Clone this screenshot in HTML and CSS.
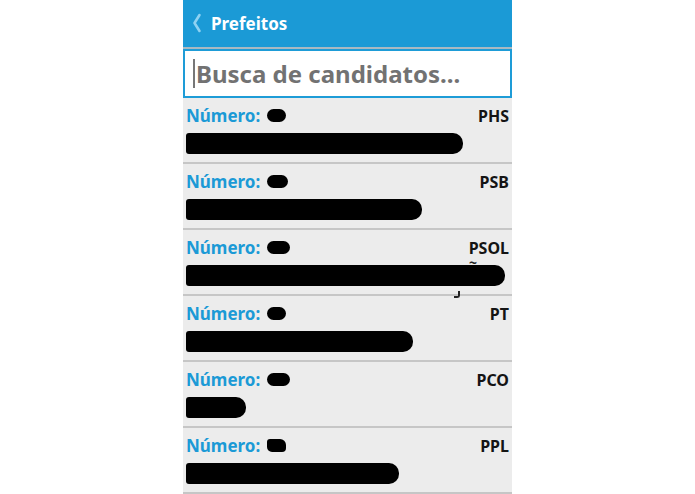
FILE: index.html
```html
<!DOCTYPE html>
<html lang="pt">

<head>
    <meta charset="UTF-8">
    <title>Prefeitos</title>
    <link rel="stylesheet" href="styles.css">
</head>

<body>

    <div class="phone">
        <!-- Action bar -->
        <div class="topbar">
            <svg class="back" width="10" height="20" viewBox="0 0 10 20">
                <path d="M7.5 2 L2.5 10 L7.5 18" fill="none" stroke="#8fd2f2" stroke-width="2.6" stroke-linecap="round" stroke-linejoin="round"/>
            </svg>
            <span class="title">Prefeitos</span>
        </div>

        <!-- Search -->
        <div class="search">
            <span class="cursor"></span>
            <span class="placeholder">Busca de candidatos...</span>
        </div>

        <!-- Candidates -->
        <ul class="list">
            <li class="item">
                <div class="row">
                    <span class="label">Número: <span class="num-blob w18"></span></span>
                    <span class="party">PHS</span>
                </div>
                <div class="name-blob" style="width: 277px"></div>
            </li>
            <li class="item">
                <div class="row">
                    <span class="label">Número: <span class="num-blob w20"></span></span>
                    <span class="party">PSB</span>
                </div>
                <div class="name-blob" style="width: 236px"></div>
            </li>
            <li class="item">
                <div class="row">
                    <span class="label">Número: <span class="num-blob w22"></span></span>
                    <span class="party">PSOL</span>
                </div>
                <div class="name-wrap">
                    <div class="name-blob" style="width: 319px"></div>
                    <span class="tilde">~</span>
                    <span class="cedilla"></span>
                </div>
            </li>
            <li class="item">
                <div class="row">
                    <span class="label">Número: <span class="num-blob w18"></span></span>
                    <span class="party">PT</span>
                </div>
                <div class="name-blob" style="width: 227px"></div>
            </li>
            <li class="item">
                <div class="row">
                    <span class="label">Número: <span class="num-blob w22"></span></span>
                    <span class="party">PCO</span>
                </div>
                <div class="name-blob" style="width: 60px"></div>
            </li>
            <li class="item">
                <div class="row">
                    <span class="label">Número: <span class="num-blob w18 rough"></span></span>
                    <span class="party">PPL</span>
                </div>
                <div class="name-blob" style="width: 213px"></div>
            </li>
        </ul>
    </div>

</body>

</html>
```

FILE: styles.css
```css
/* Phone list screen */
body {
    margin: 0;
    background: #fff;
    font-family: 'Noto Sans', 'Open Sans', sans-serif;
}

.phone {
    width: 329px;
    height: 494px;
    margin: 0 auto;
    background: #ececec;
    overflow: hidden;
}

.topbar {
    height: 49px;
    box-sizing: border-box;
    background: #1b9ad6;
    border-bottom: 2px solid #a9b9c2;
    display: flex;
    align-items: center;
    padding-left: 9px;
}

.back {
    margin-right: 9px;
    margin-top: -1px;
}

.title {
    color: #fff;
    font-weight: bold;
    font-size: 17px;
}

.search {
    height: 49px;
    box-sizing: border-box;
    background: #fff;
    border: 2px solid #1e9cd7;
    display: flex;
    align-items: center;
    padding-left: 8px;
}

.cursor {
    width: 2px;
    height: 29px;
    background: #777;
    margin-right: 1px;
}

.placeholder {
    color: #727272;
    font-weight: bold;
    font-size: 24px;
    line-height: 1;
}

.list {
    list-style: none;
    margin: 0;
    padding: 0;
}

.item {
    height: 66px;
    box-sizing: border-box;
    border-bottom: 2px solid #c6c6c6;
    padding: 6px 3px 0 3px;
}

.row {
    display: flex;
    justify-content: space-between;
    align-items: baseline;
    height: 22px;
}

.label {
    color: #1b9ad6;
    font-weight: bold;
    font-size: 17px;
    display: flex;
    align-items: center;
    gap: 7px;
}

.num-blob {
    display: inline-block;
    height: 13px;
    background: #000;
    border-radius: 7px;
}

.w18 { width: 19px; }
.w20 { width: 21px; }
.w22 { width: 23px; }

.rough {
    border-radius: 3px 6px 4px 5px;
}

.party {
    color: #141414;
    font-weight: bold;
    font-size: 16px;
    line-height: 17px;
}

.name-wrap {
    position: relative;
}

.name-blob {
    height: 21px;
    margin-top: 7px;
    background: #000;
    border-radius: 3px 10px 10px 3px;
}

.tilde {
    position: absolute;
    left: 283px;
    top: -3px;
    font-size: 14px;
    font-weight: bold;
    color: #222;
    line-height: 2px;
}

.cedilla {
    position: absolute;
    left: 268px;
    top: 26px;
    width: 4px;
    height: 5px;
    border-right: 2px solid #222;
    border-bottom: 2px solid #222;
    border-radius: 0 0 3px 0;
}
```
